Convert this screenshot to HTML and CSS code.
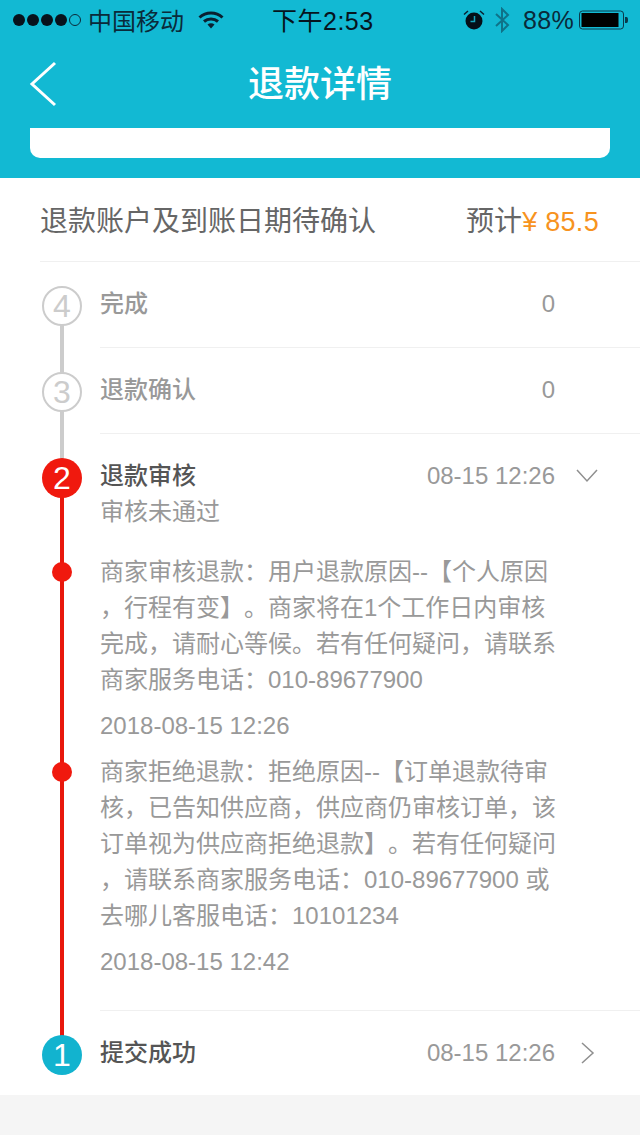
FILE: index.html
```html
<!DOCTYPE html>
<html lang="zh-CN">
<head>
<meta charset="UTF-8">
<title>退款详情</title>
<meta name="viewport" content="width=device-width,initial-scale=1" />
<link rel="stylesheet" href="styles.css">
</head>
<body>

  <header class="top">
    <div class="status">
      <div class="status-left">
        <span class="dots"><i></i><i></i><i></i><i></i><i class="off"></i></span>
        <span class="carrier">中国移动</span>
        <svg class="wifi" viewBox="0 0 26 20" width="26" height="20">
          <path d="M1.5 7.5C8 1.5 18 1.5 24.500 7.500" fill="none" stroke="#0a2030" stroke-width="3"/>
          <path d="M6 11.500C10 8 16 8 20 11.500" fill="none" stroke="#0a2030" stroke-width="3"/>
          <path d="M9.500 14.500C11.500 12.800 14.500 12.800 16.500 14.500L13 18.500Z" fill="#0a2030"/>
        </svg>
      </div>
      <div class="clock">下午2:53</div>
      <div class="status-right">
        <svg class="alarm" viewBox="0 0 22 22" width="22" height="22">
          <circle cx="11" cy="12" r="8.500" fill="#050f18"/>
          <path d="M1 5.500L5 2M21 5.500L17 2" stroke="#0a2030" stroke-width="1.500" fill="none"/>
          <path d="M11.500 7V12.500H7.500" stroke="#17a5bd" stroke-width="1.500" fill="none"/>
        </svg>
        <svg class="bt" viewBox="0 0 16 26" width="16" height="26">
          <path d="M2 7L14 18L8 24V2L14 8L2 19" fill="none" stroke="#0f7288" stroke-width="2"/>
        </svg>
        <span class="percent">88%</span>
        <svg class="battery" viewBox="0 0 50 20" width="50" height="20">
          <rect x="0.500" y="1" width="44" height="18" rx="3" fill="none" stroke="#0a3a4c" stroke-width="1"/>
          <rect x="2.500" y="3" width="37" height="14" fill="#000"/>
          <path d="M46 7H47.500C48.500 7 49 8 49 10C49 12 48.500 13 47.500 13H46Z" fill="#0a3a4c"/>
        </svg>
      </div>
    </div>

    <div class="nav">
      <svg class="back" viewBox="0 0 28 46" width="28" height="46">
        <path d="M26 2L3 23L26 44" fill="none" stroke="#fff" stroke-width="3"/>
      </svg>
      <h1>退款详情</h1>
    </div>

    <div class="top-card"></div>
  </header>

  <div class="summary">
    <div class="summary-row">
      <span class="summary-title">退款账户及到账日期待确认</span>
      <span class="summary-money">预计<em>¥ 85.5</em></span>
    </div>
  </div>

  <section class="steps">

    <div class="step step-wait">
      <div class="rail">
        <span class="line line-grey line-down"></span>
        <span class="num">4</span>
      </div>
      <div class="body">
        <div class="head">
          <span class="name">完成</span>
          <span class="when">0</span>
        </div>
      </div>
    </div>

    <div class="step step-wait">
      <div class="rail">
        <span class="line line-grey line-full"></span>
        <span class="num">3</span>
      </div>
      <div class="body">
        <div class="head">
          <span class="name">退款确认</span>
          <span class="when">0</span>
        </div>
      </div>
    </div>

    <div class="step step-active">
      <div class="rail">
        <span class="line line-grey line-up"></span>
        <span class="line line-red line-down"></span>
        <span class="num">2</span>
      </div>
      <div class="body">
        <div class="head">
          <span class="name">退款审核</span>
          <span class="when">08-15 12:26</span>
          <svg class="arrow arrow-down" viewBox="0 0 24 16" width="24" height="16">
            <path d="M2 2L12 13L22 2" fill="none" stroke="#8f8f8f" stroke-width="1.500"/>
          </svg>
        </div>
        <div class="sub">审核未通过</div>

        <div class="log">
          <p>商家审核退款：用户退款原因--【个人原因<br>，行程有变】。商家将在1个工作日内审核<br>完成，请耐心等候。若有任何疑问，请联系<br>商家服务电话：010-89677900</p>
          <time>2018-08-15 12:26</time>
        </div>
        <div class="log">
          <p>商家拒绝退款：拒绝原因--【订单退款待审<br>核，已告知供应商，供应商仍审核订单，该<br>订单视为供应商拒绝退款】。若有任何疑问<br>，请联系商家服务电话：010-89677900 或<br>去哪儿客服电话：10101234</p>
          <time>2018-08-15 12:42</time>
        </div>
      </div>
    </div>

    <div class="step step-done">
      <div class="rail">
        <span class="line line-red line-up"></span>
        <span class="num">1</span>
      </div>
      <div class="body">
        <div class="head">
          <span class="name">提交成功</span>
          <span class="when">08-15 12:26</span>
          <svg class="arrow arrow-right" viewBox="0 0 16 24" width="16" height="24">
            <path d="M2 2L13 12L2 22" fill="none" stroke="#8f8f8f" stroke-width="1.500"/>
          </svg>
        </div>
      </div>
    </div>

  </section>

  <div class="foot"></div>

</body>
</html>
```

FILE: styles.css
```css
* {
  box-sizing: border-box;
}
body {
  margin: 0;
  background: #fff;
  font-family: "Liberation Sans", "Noto Sans CJK SC", sans-serif;
  font-size: 24px;
  color: #999;
  text-spacing-trim: space-all;
}

/* teal header */
.top {
  background: #12b9d3;
  height: 178px;
  padding-bottom: 20px;
  display: flex;
  flex-direction: column;
}
.status {
  height: 40px;
  padding: 0 11px 0 13px;
  display: flex;
  align-items: center;
  position: relative;
  color: #0a2a3a;
  flex: none;
}
.status-left {
  display: flex;
  align-items: center;
}
.dots {
  display: flex;
  gap: 2px;
  margin-right: 7px;
}
.dots i {
  width: 12px;
  height: 12px;
  border-radius: 50%;
  background: #07121c;
}
.dots i.off {
  background: none;
  border: 1px solid #0a2a3a;
}
.carrier {
  margin-right: 14px;
  margin-bottom: 2px;
}
.clock {
  position: absolute;
  left: 272px;
  top: 3px;
  font-size: 25px;
  line-height: 36px;
  letter-spacing: 0.500px;
  color: #06141e;
}
.status-right {
  margin-left: auto;
  display: flex;
  align-items: center;
}
.alarm {
  margin-right: 9px;
}
.bt {
  margin-right: 13px;
}
.percent {
  font-size: 25px;
  letter-spacing: 0.300px;
  margin-right: 5px;
}
.nav {
  height: 88px;
  padding-left: 29px;
  display: flex;
  align-items: center;
  position: relative;
  flex: none;
}
.nav h1 {
  position: absolute;
  left: 0;
  right: 0;
  top: 0;
  margin: 0;
  line-height: 90px;
  text-align: center;
  color: #fff;
  font-size: 36px;
  font-weight: 500;
}
.top-card {
  height: 30px;
  margin: 0 30px;
  background: #fff;
  border-radius: 0 0 10px 10px;
  flex: none;
}

/* amount row */
.summary {
  padding-left: 40px;
}
.summary-row {
  height: 84px;
  padding: 0 41px 2px 0;
  border-bottom: 1px solid #f0f0f0;
  display: flex;
  justify-content: space-between;
  align-items: center;
  font-size: 28px;
  color: #666;
}
.summary-money em {
  font-style: normal;
  font-size: 27px;
  letter-spacing: 0.300px;
  color: #f7931e;
}

/* timeline */
.step {
  display: flex;
}
.rail {
  width: 100px;
  flex: none;
  position: relative;
}
.num {
  position: absolute;
  left: 42px;
  top: 24px;
  width: 40px;
  height: 40px;
  border-radius: 50%;
  display: flex;
  align-items: center;
  justify-content: center;
  font-size: 32px;
  background: #fff;
}
.line {
  position: absolute;
  left: 60px;
  width: 4px;
}
.line-grey {
  background: #ccc;
}
.line-red {
  background: #e8170c;
}
.line-full {
  top: 0;
  bottom: 0;
}
.line-down {
  top: 44px;
  bottom: 0;
}
.line-up {
  top: 0;
  height: 44px;
}
.step-wait .num {
  border: 2px solid #ccc;
  color: #ccc;
}
.step-active .num {
  background: #f0190e;
  color: #fff;
}
.step-done .num {
  background: #12b3cf;
  color: #fff;
}
.body {
  flex: 1;
  min-width: 0;
  padding-right: 85px;
  border-bottom: 1px solid #f0f0f0;
}
.step-wait .body {
  height: 86px;
}
.step-done .body {
  height: 84px;
  border-bottom: 0;
}
.head {
  height: 84px;
  display: flex;
  align-items: center;
  position: relative;
}
.name {
  font-weight: 500;
  color: #999;
  margin-bottom: 6px;
}
.step-active .name,
.step-done .name {
  color: #555;
}
.when {
  margin-left: auto;
  color: #999;
}
.arrow {
  position: absolute;
}
.arrow-down {
  right: -44px;
}
.arrow-right {
  right: -41px;
}
.sub {
  margin-top: -24px;
  line-height: 36px;
  margin-bottom: 24px;
}
.log {
  position: relative;
  white-space: nowrap;
}
.log::before {
  content: "";
  position: absolute;
  left: -48px;
  top: 8px;
  width: 20px;
  height: 20px;
  border-radius: 50%;
  background: #f0190e;
}
.log p {
  margin: 0;
  line-height: 36px;
}
.log time {
  display: block;
  line-height: 36px;
  margin-top: 10px;
  margin-bottom: 10px;
}
.log:last-child {
  padding-bottom: 20px;
}

.foot {
  height: 40px;
  background: #f5f5f5;
}
```
